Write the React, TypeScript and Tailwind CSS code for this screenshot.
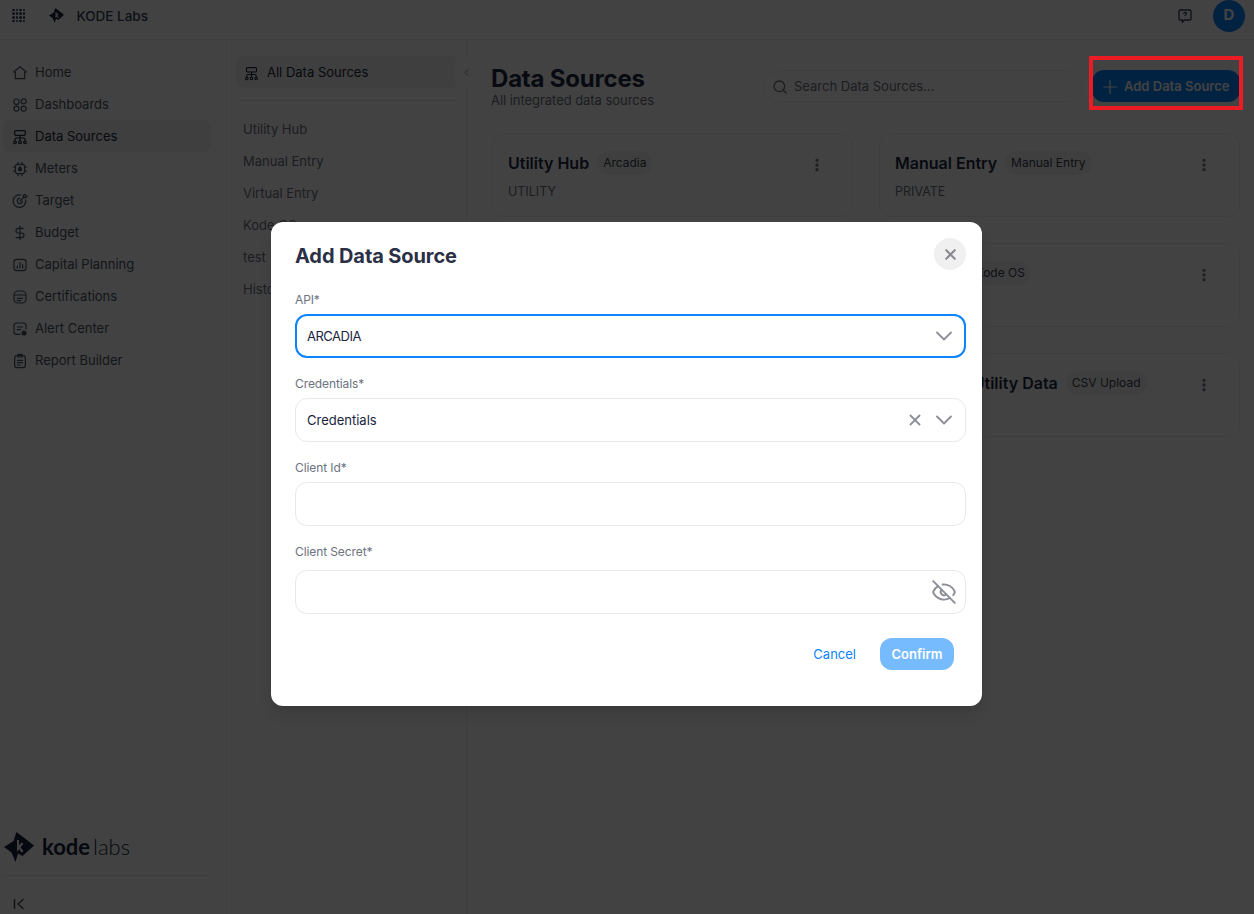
import React from "react";
import { ChevronDown, ChevronLeft, DollarSign, EllipsisVertical, EyeOff, Plus, Search, X } from "lucide-react";

const S = ({ children, size = 16, className = "" }: { children: React.ReactNode; size?: number; className?: string }) => (
  <svg width={size} height={size} viewBox="0 0 24 24" fill="none" stroke="currentColor" strokeWidth="1.8" strokeLinecap="round" strokeLinejoin="round" className={className}>
    {children}
  </svg>
);

const HomeI = () => <S><path d="M12 2.5 21.5 10.5 19 11v9.5H5V11L2.5 10.5Z" /></S>;
const DashI = () => (
  <S>
    <rect x="3" y="3" width="7.5" height="8" rx="3" />
    <circle cx="17.5" cy="6.5" r="3.7" />
    <circle cx="6.7" cy="17.5" r="3.7" />
    <circle cx="17.5" cy="17.5" r="3.7" />
  </S>
);
const NetI = ({ size = 16 }: { size?: number }) => (
  <S size={size}>
    <rect x="4" y="2.5" width="16" height="7" rx="1.5" />
    <path d="M12 9.5V18M4.5 18v-2.5a2 2 0 0 1 2-2h11a2 2 0 0 1 2 2V18" />
    <circle cx="4.5" cy="20" r="2" />
    <circle cx="12" cy="20" r="2" />
    <circle cx="19.5" cy="20" r="2" />
  </S>
);
const MeterI = () => (
  <S>
    <rect x="5" y="5" width="14" height="14" rx="3.5" />
    <path d="M9 2v3M15 2v3M9 19v3M15 19v3M2 9h3M2 15h3M19 9h3M19 15h3" />
    <path d="M12 8.5c1.4 1.8 2.2 3 2.2 4.2a2.2 2.2 0 0 1-4.4 0c0-1.2.8-2.4 2.2-4.2Z" fill="currentColor" />
  </S>
);
const TargetI = () => (
  <S>
    <path d="M20.5 10.5A9.5 9.5 0 1 1 13.5 3" />
    <path d="M15.5 12a3.8 3.8 0 1 1-3.8-3.8" />
    <path d="M12 12l5-5M17 3.5V7h3.5L23 4.5h-3V2Z" />
  </S>
);
const CapI = () => (
  <S>
    <rect x="3" y="3.5" width="18" height="17" rx="4" />
    <path d="M8 16.5v-3M12 16.5v-8M16 16.5v-5" />
  </S>
);
const CertI = () => (
  <S>
    <rect x="3" y="3" width="18" height="18" rx="6" />
    <path d="M3.5 9h17M8 14h8M8 17.5h5" />
  </S>
);
const AlertI = () => (
  <S>
    <path d="M12 20H7a4 4 0 0 1-4-4V7a4 4 0 0 1 4-4h10a4 4 0 0 1 4 4v5" />
    <path d="M8 9h8M8 13h5" />
    <circle cx="18" cy="18" r="3" fill="currentColor" />
  </S>
);
const ReportI = () => (
  <S>
    <rect x="4" y="4" width="16" height="18" rx="3.5" />
    <rect x="8.5" y="2" width="7" height="4" rx="1.5" />
    <path d="M8 11h8M8 14.5h8M8 18h5" />
  </S>
);

const nav: [string, React.ReactNode][] = [
  ["Home", <HomeI />],
  ["Dashboards", <DashI />],
  ["Data Sources", <NetI />],
  ["Meters", <MeterI />],
  ["Target", <TargetI />],
  ["Budget", <DollarSign size={16} strokeWidth={1.8} />],
  ["Capital Planning", <CapI />],
  ["Certifications", <CertI />],
  ["Alert Center", <AlertI />],
  ["Report Builder", <ReportI />],
];

const Logo = ({ size }: { size: number }) => (
  <svg width={size} height={size} viewBox="0 0 30 30">
    <path d="M12.5 0 30 13.5 18.5 24 14 21.5 11.5 30 7.5 20.5 0 15 9.5 9Z" fill="#1a1f3c" />
    <path d="M13 8v12l2-3 2.5 3.5 2-1.5-3-3.5 3-4-2-1-2.5 3V8Z" fill="#ffffff" />
  </svg>
);

const cards = [
  ["Utility Hub", "Arcadia", "UTILITY"],
  ["Manual Entry", "Manual Entry", "PRIVATE"],
  ["Virtual Entry", "Virtual Entry", ""],
  ["Kode OS", "Kode OS", ""],
  ["test", "Arcadia", ""],
  ["Historical Utility Data", "CSV Upload", ""],
];

const Field = ({ label, children, mb }: { label: string; children?: React.ReactNode; mb: string }) => (
  <div className={mb}>
    <div className="pt-[1px] text-[12px] leading-4 tracking-[-0.1px] text-[#6b7280]">{label}</div>
    {children}
  </div>
);

export default function App() {
  return (
    <div className="relative h-[914px] w-[1254px] overflow-hidden bg-white text-[#1f2a44]" style={{ fontFamily: "Inter, 'Noto Sans', sans-serif" }}>
      <header className="flex h-10 items-center justify-between border-b border-[#f0f0f0] pr-[9px] pb-2 pl-3">
        <div className="flex items-center">
          <div className="grid grid-cols-4 gap-[1px]">
            {Array.from({ length: 16 }).map((_, i) => (
              <span key={i} className="h-[2.6px] w-[2.6px] rounded-full bg-[#374151]" />
            ))}
          </div>
          <div className="ml-[24px]"><Logo size={15} /></div>
          <span className="mt-[2px] ml-3 text-[13.5px] font-medium text-[#374151]">KODE Labs</span>
        </div>
        <div className="flex items-center gap-5">
          <svg width="16" height="16" viewBox="0 0 24 24" fill="none" stroke="#374151" strokeWidth="2" strokeLinejoin="round">
            <path d="M5 3h14a2 2 0 0 1 2 2v11a2 2 0 0 1-2 2h-8l-3 3.5V18H5a2 2 0 0 1-2-2V5a2 2 0 0 1 2-2Z" />
            <path d="M10 8.5a2 2 0 1 1 2.8 1.8c-.6.3-.8.7-.8 1.2M12 14v.3" />
          </svg>
          <div className="flex h-8 w-8 items-center justify-center rounded-full bg-[#0a84ff] text-[15px] font-bold text-white">D</div>
        </div>
      </header>

      <div className="flex h-[874px]">
        <aside className="flex w-[227px] shrink-0 flex-col border-r border-[#f4f4f4] pt-4 pr-[15px] pl-[3px]">
          <nav className="flex-1">
            {nav.map(([l, ic]) => (
              <div key={l} className={`flex h-8 items-center rounded-lg pt-[2px] pl-[9px] text-[13px] ${l === "Data Sources" ? "bg-[#f1f1f1] text-[#1f2937]" : "text-[#4b5563]"}`}>
                <span className="flex w-4 justify-center">{ic}</span>
                <span className="ml-[7px]">{l}</span>
              </div>
            ))}
          </nav>
          <div className="flex items-center pb-[13px] pl-[1px]">
            <Logo size={30} />
            <span className="ml-2 text-[22px] leading-none text-[#1a1f3c]" style={{ fontFamily: "Lato, sans-serif" }}>
              <span className="font-bold">kode</span><span className="ml-[3px] font-light">labs</span>
            </span>
          </div>
          <div className="h-[39px] border-t border-[#f0f0f0] pt-[24px] pl-[10px] text-[#4b5563]">
            <svg width="12" height="12" viewBox="0 0 12 12" fill="none" stroke="currentColor" strokeWidth="1.6" strokeLinecap="round" strokeLinejoin="round" className="-mt-[2px]">
              <path d="M1.5 1.5v9M10 1.5 5 6l5 4.5" />
            </svg>
          </div>
        </aside>

        <div className="relative w-[240px] shrink-0 border-r border-[#f0f0f0] pt-4 pr-[8px] pl-[9px]">
          <div className="flex h-8 items-center rounded-lg bg-[#f1f1f1] pt-[2px] pl-[8px] text-[13px] text-[#1f2937]">
            <NetI size={15} />
            <span className="ml-2">All Data Sources</span>
          </div>
          <div className="mt-3 border-t border-[#f0f0f0]" />
          <div className="mt-[13px]">
            {["Utility Hub", "Manual Entry", "Virtual Entry", "Kode OS", "test", "Historical Data"].map((t) => (
              <div key={t} className="flex h-8 items-center pl-[7px] text-[13px] text-[#6b7280]">{t}</div>
            ))}
          </div>
          <div className="absolute top-4 -right-3 flex h-8 w-6 items-center justify-center rounded-full bg-white text-[#6b7280]">
            <ChevronLeft size={11} />
          </div>
        </div>

        <main className="min-w-0 flex-1 pt-6 pr-[14px] pl-[25px]">
          <div className="flex items-start justify-between">
            <div className="-ml-[1px]">
              <h1 className="text-[24px] leading-[30px] font-bold tracking-[-0.2px] text-[#1f2a44]">Data Sources</h1>
              <p className="-mt-[2px] text-[13px] leading-4 tracking-[-0.05px] text-[#6b7280]">All integrated data sources</p>
            </div>
            <div className="mt-[6px] flex items-center">
              <div className="flex h-8 w-[320px] items-center rounded-full border border-[#f0f0f0] pt-[1px] pl-[8px] text-[13px] text-[#6b7280]">
                <Search size={16} strokeWidth={2} />
                <span className="ml-[6px]">Search Data Sources...</span>
              </div>
              <div className="ml-[9px] flex h-8 w-[148px] items-center rounded-xl bg-[#0a84ff] pt-[1px] pl-[7px] text-[13px] font-semibold text-white">
                <Plus size={22} strokeWidth={1.3} />
                <span className="ml-[3px]">Add Data Source</span>
              </div>
            </div>
          </div>
          <div className="mt-[25px] grid grid-cols-[361px_361px] gap-x-[26px] gap-y-[26px]">
            {cards.map(([n, c, s]) => (
              <div key={n} className="relative h-[84px] rounded-xl border border-[#f0f0f0] pt-[17px] pl-[15px]">
                <div className="flex items-center">
                  <span className="text-[16px] leading-6 font-semibold text-[#1f2a44]">{n}</span>
                  <span className="ml-2 flex h-6 items-center rounded-full bg-[#f3f3f3] px-[6px] text-[12px] text-[#374151]">{c}</span>
                </div>
                <div className="mt-[9px] text-[12.5px] leading-4 text-[#6b7280]">{s}</div>
                <EllipsisVertical size={16} strokeWidth={3} className="absolute top-[23px] right-[27px] text-[#6b7280]" />
              </div>
            ))}
          </div>
        </main>
      </div>

      <div className="absolute inset-0 bg-black/74" />

      <div className="absolute top-[56px] left-[1089px] h-[54px] w-[154px] border-[4px] border-[#ed1c24]" />

      <div className="absolute top-[222px] left-[271px] h-[484px] w-[711px] rounded-xl bg-white pt-[16px] pr-4 pl-6 shadow-lg">
        <div className="flex h-8 items-center justify-between">
          <h2 className="mt-[4px] text-[20px] font-bold tracking-[-0.1px] text-[#2a2f45]">Add Data Source</h2>
          <button className="flex h-8 w-8 items-center justify-center rounded-full bg-[#f0f0f0] text-[#8a8a92]">
            <X size={17} strokeWidth={3} />
          </button>
        </div>
        <div className="mt-[21px]">
          <Field label="API*" mb="mb-[17px]">
            <div className="mt-[6px] flex h-11 items-center justify-between rounded-xl border-2 border-[#0a84ff] pr-[6px] pl-[10px] text-[13px] text-[#1a2340]">
              <span className="pt-[2px] tracking-[-0.5px]">ARCADIA</span>
              <ChevronDown size={28} strokeWidth={1.6} className="text-[#8e8e99]" />
            </div>
          </Field>
          <Field label="Credentials*" mb="mb-[17px]">
            <div className="mt-[6px] flex h-11 items-center justify-between rounded-xl border border-[#e8e8ea] pr-[7px] pl-[11px] text-[13px] text-[#1a2340]">
              <span className="pt-[2px]">Credentials</span>
              <span className="flex items-center gap-[6px] text-[#8e8e99]">
                <X size={18} strokeWidth={2.4} />
                <ChevronDown size={28} strokeWidth={1.6} />
              </span>
            </div>
          </Field>
          <Field label="Client Id*" mb="mb-[17px]">
            <div className="mt-[6px] h-11 rounded-xl border border-[#e8e8ea]" />
          </Field>
          <Field label="Client Secret*" mb="">
            <div className="mt-[10px] flex h-11 items-center justify-end rounded-xl border border-[#e8e8ea] pr-[8px] text-[#8e8e99]">
              <EyeOff size={26} strokeWidth={1.8} />
            </div>
          </Field>
        </div>
        <div className="mt-6 flex items-center justify-end pr-[12px]">
          <span className="pt-[2px] text-[13px] text-[#0a84ff]">Cancel</span>
          <span className="ml-[24px] flex h-8 w-[74px] items-center justify-center rounded-xl bg-[#77bbff] pt-[2px] text-[13px] font-semibold text-white">Confirm</span>
        </div>
      </div>
    </div>
  );
}
